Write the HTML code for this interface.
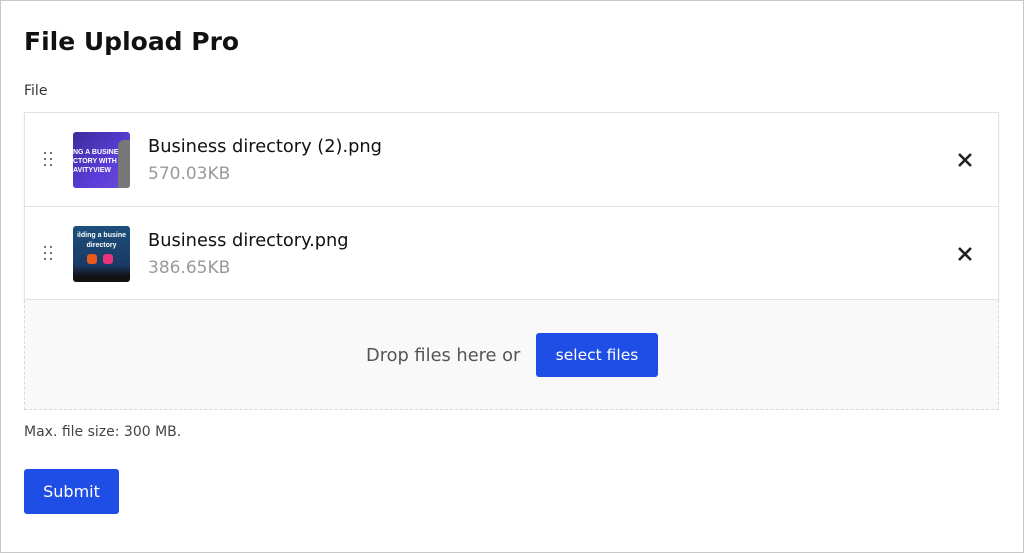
<!DOCTYPE html>
<html><head><style>
*{margin:0;padding:0;box-sizing:border-box}
body{width:1024px;height:553px;background:#fff;font-family:"DejaVu Sans","Liberation Sans",sans-serif;position:relative;overflow:hidden}
.frame{position:absolute;left:0;top:0;width:1024px;height:553px;border:1px solid #c8c8c8}
h1{position:absolute;left:24px;top:27px;font-size:25px;font-weight:bold;color:#111}
.lbl{position:absolute;left:24px;top:83px;font-size:14px;color:#333}
.list{position:absolute;left:24px;top:112px;width:975px;height:188px;border:1px solid #e2e2e2;box-shadow:0 1px 2px rgba(0,0,0,.08)}
.row{position:absolute;left:0;width:973px;height:94px;border-bottom:1px solid #e2e2e2}
.grip{position:absolute;left:19px;top:39px;width:10px;height:16px}
.grip i{position:absolute;width:2px;height:2px;background:#444;border-radius:1px}
.thumb{position:absolute;left:48px;top:19px;width:57px;height:56px;border-radius:3px;overflow:hidden;font-family:"Liberation Sans",sans-serif}
.name{position:absolute;left:123px;top:23px;font-size:17.8px;color:#111}
.size{position:absolute;left:123px;top:51px;font-size:17px;color:#999}
.x{position:absolute;left:931px;top:38px;width:18px;height:18px}
.drop{position:absolute;left:24px;top:300px;width:975px;height:110px;border:1px dashed #d8d8d8;border-top:none;background:#f9f9f9}
.dt{position:absolute;left:366px;top:345px;font-size:17.8px;color:#555}
.sel{position:absolute;left:536px;top:333px;width:122px;height:44px;background:#1f4ee6;border-radius:3px;color:#fff;font-size:15.5px;text-align:center;line-height:44px}
.max{position:absolute;left:24px;top:424px;font-size:14px;color:#444}
.sub{position:absolute;left:24px;top:469px;width:95px;height:45px;background:#1f4ee6;border-radius:3px;color:#fff;font-size:16px;text-align:center;line-height:45px}
</style></head><body>
<div class="frame"></div>
<h1>File Upload Pro</h1>
<div class="lbl">File</div>
<div class="list">
 <div class="row" style="top:0">
  <div class="grip"><i style="left:0;top:0"></i><i style="left:6px;top:0"></i><i style="left:0;top:6px"></i><i style="left:6px;top:6px"></i><i style="left:0;top:12px"></i><i style="left:6px;top:12px"></i></div>
  <div class="thumb" style="background:linear-gradient(135deg,#3b2d9a,#5a3dd8 60%,#6b4bd6)">
   <div style="position:absolute;left:0;top:16px;color:#fff;font-size:7px;font-weight:bold;line-height:9px">NG A BUSINESS<br>CTORY WITH<br>AVITYVIEW</div>
   <div style="position:absolute;right:0;top:8px;width:12px;height:48px;background:#777;border-radius:6px 0 0 0"></div>
  </div>
  <div class="name">Business directory (2).png</div>
  <div class="size">570.03KB</div>
  <svg class="x" viewBox="0 0 18 18"><path d="M3 3L15 15M15 3L3 15" stroke="#222" stroke-width="2.6"/></svg>
 </div>
 <div class="row" style="top:94px;border-bottom:none">
  <div class="grip"><i style="left:0;top:0"></i><i style="left:6px;top:0"></i><i style="left:0;top:6px"></i><i style="left:6px;top:6px"></i><i style="left:0;top:12px"></i><i style="left:6px;top:12px"></i></div>
  <div class="thumb" style="background:linear-gradient(180deg,#1c4f7a,#1a3a66 70%,#111 90%)">
   <div style="position:absolute;left:0;top:5px;width:57px;color:#fff;font-size:7px;font-weight:bold;line-height:10px;text-align:center;white-space:nowrap">ilding a busine<br>directory</div>
   <div style="position:absolute;left:14px;top:28px;width:10px;height:10px;background:#e85a1c;border-radius:3px"></div>
   <div style="position:absolute;left:30px;top:28px;width:10px;height:10px;background:#e8327a;border-radius:3px"></div>
  </div>
  <div class="name">Business directory.png</div>
  <div class="size">386.65KB</div>
  <svg class="x" viewBox="0 0 18 18"><path d="M3 3L15 15M15 3L3 15" stroke="#222" stroke-width="2.6"/></svg>
 </div>
</div>
<div class="drop"></div>
<div class="dt">Drop files here or</div>
<div class="sel">select files</div>
<div class="max">Max. file size: 300 MB.</div>
<div class="sub">Submit</div>
</body></html>
